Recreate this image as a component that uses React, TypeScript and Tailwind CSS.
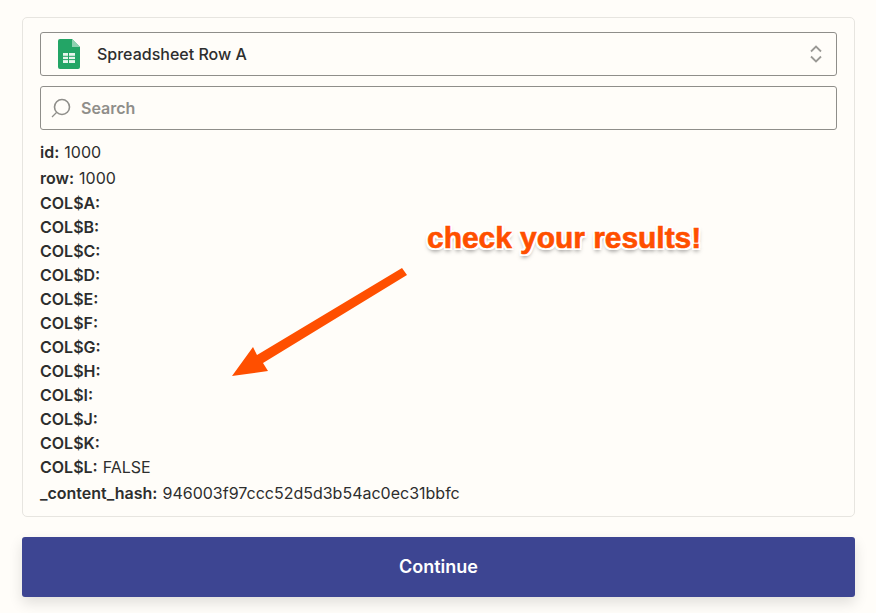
import React from "react"

const emptyCols = ["A", "B", "C", "D", "E", "F", "G", "H", "I", "J", "K"]

const SheetsIcon = () => (
  <svg width="22" height="30" viewBox="0 0 22 30" className="shrink-0">
    <path d="M2 0H14L22 8V28a2 2 0 0 1-2 2H2a2 2 0 0 1-2-2V2a2 2 0 0 1 2-2z" fill="#23a566" />
    <path d="M14 0L22 8H14z" fill="#8ed1b1" />
    <path d="M5 14H17V24H5z" fill="#e6f4ec" />
    <path d="M5 17.3H17M5 20.6H17M10.5 14V24" stroke="#23a566" strokeWidth="1" />
  </svg>
)

const Row = ({ label, value, h }: { label: string; value?: string; h: string }) => (
  <div className={`flex items-center gap-[5px] ${h}`}>
    <span className="font-semibold">{label}</span>
    {value && <span>{value}</span>}
  </div>
)

export default function App() {
  return (
    <div className="relative h-[613px] w-[876px] overflow-hidden bg-[#fffdf9] pt-[17px] px-[22px] text-[16px] text-[#2d2e2e] [font-family:Inter,sans-serif]">
      <div className="h-[500px] w-[833px] rounded-[5px] border border-[#e7e5e0] px-[17px] pt-[14px]">
        <div className="flex h-[44px] items-center rounded-[3px] border border-[#8f8e8a] pl-[17px] pr-[13px]">
          <SheetsIcon />
          <span className="ml-[17px] flex-1 text-[16px] font-medium">Spreadsheet Row A</span>
          <svg width="14" height="20" viewBox="0 0 14 20" fill="none" stroke="#9a9995" strokeWidth="1.8">
            <path d="M2 7.5L7 2.5L12 7.5M2 12.5L7 17.5L12 12.5" />
          </svg>
        </div>
        <div className="mt-[10px] flex h-[44px] items-center rounded-[3px] border border-[#8f8e8a] pl-[10px]">
          <svg width="20" height="20" viewBox="0 0 20 20" fill="none" stroke="#8f8e8a" className="shrink-0">
            <circle cx="11" cy="9" r="7.5" strokeWidth="1.6" />
            <path d="M5.5 14.5L1 19" strokeWidth="1.2" />
          </svg>
          <span className="ml-[10px] text-[16px] font-semibold text-[#8f8e8a]">Search</span>
        </div>
        <div className="mt-[9px] leading-none">
          <Row label="id:" value="1000" h="h-[26px]" />
          <Row label="row:" value="1000" h="h-[26px]" />
          {emptyCols.map((c) => (
            <Row key={c} label={`COL$${c}:`} h="h-[24px]" />
          ))}
          <Row label="COL$L:" value="FALSE" h="h-[24px]" />
          <Row label="_content_hash:" value="946003f97ccc52d5d3b54ac0ec31bbfc" h="h-[28px]" />
        </div>
      </div>
      <button className="mt-[20px] h-[60px] w-[833px] rounded-[3px] bg-[#3d4592] pb-[1px] text-[18px] font-semibold text-white shadow-[0_6px_14px_rgba(0,0,0,0.12)]">
        Continue
      </button>

      {/* annotation laid over the card */}
      <span className="absolute left-[427px] top-[219px] whitespace-nowrap text-[30px] leading-[38px] font-bold tracking-[-0.05px] text-[#ff4f00] [font-family:'Liberation_Sans',sans-serif] [-webkit-text-stroke:0.6px_#ff4f00] [text-shadow:-2px_-2px_0_#fff,2px_-2px_0_#fff,-2px_2px_0_#fff,2px_2px_0_#fff,0_2px_0_#fff,0_-2px_0_#fff,2px_0_0_#fff,-2px_0_0_#fff,0_3px_4px_rgba(0,0,0,0.5)]">
        check your results!
      </span>
      <svg width="876" height="613" className="pointer-events-none absolute left-0 top-0">
        <polygon points="402,268 407,275 263,363 268,371 232,376 253,347 257,355" fill="#ff4f00" />
      </svg>
    </div>
  )
}
